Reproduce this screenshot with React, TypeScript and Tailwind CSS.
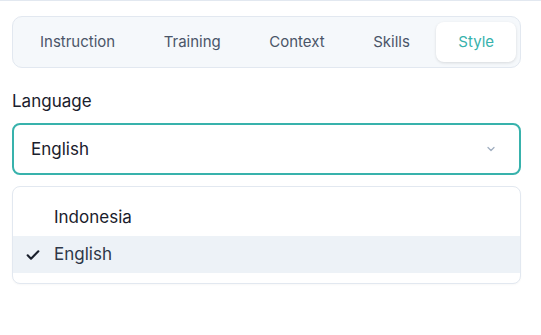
import React from "react";

const tabs = ["Instruction", "Training", "Context", "Skills", "Style"];

export default function App() {
  return (
    <div
      className="w-[541px] h-[335px] bg-white border-t border-[#e2e8f0] pl-3 pr-5 pt-[15px]"
      style={{ fontFamily: "Inter, 'Noto Sans', sans-serif" }}
    >
      <div className="flex items-center gap-[4.5px] h-[52px] p-[5px] rounded-[10px] border border-[#e2e8f0] bg-[#f5f8fb]">
        {tabs.map((t) => (
          <div
            key={t}
            className={
              t === "Style"
                ? "h-[40px] flex items-center pt-[1px] px-[22px] rounded-[8px] bg-white shadow-[0_1px_3px_rgba(0,0,0,0.12)] text-[15px] text-[#38b2ac]"
                : "h-[40px] flex items-center pt-[1px] px-[22px] text-[15px] text-[#4a5568]"
            }
          >
            {t}
          </div>
        ))}
      </div>

      <div className="mt-[22px] text-[17px] leading-[22px] text-[#1a202c]">Language</div>

      <div className="mt-[11px] h-[52px] rounded-[8px] border-2 border-[#38b2ac] flex items-center justify-between pl-[17px] pr-[22px]">
        <span className="text-[17px] pt-[2px] text-[#1a202c]">English</span>
        <svg width="12" height="12" viewBox="0 0 24 24" fill="none" stroke="#a0aec0" strokeWidth="2.5" strokeLinecap="round" strokeLinejoin="round">
          <path d="M6 9l6 6 6-6" />
        </svg>
      </div>

      <div className="mt-[11px] rounded-[8px] border border-[#e2e8f0] bg-white pt-[12px] pb-[10px] shadow-[0_1px_2px_rgba(0,0,0,0.03)]">
        <div className="h-[37px] flex items-center pl-[41px] text-[17px] text-[#1a202c]">Indonesia</div>
        <div className="h-[37px] flex items-center bg-[#edf2f7] text-[17px] text-[#2d3748]">
          <div className="w-[41px] flex justify-center pr-[1px]">
            <svg width="16" height="16" viewBox="0 0 24 24" fill="none" stroke="#1a202c" strokeWidth="3.2" strokeLinecap="round" strokeLinejoin="round">
              <path d="M4 12.5l5 5L20 6.5" />
            </svg>
          </div>
          English
        </div>
      </div>
    </div>
  );
}
